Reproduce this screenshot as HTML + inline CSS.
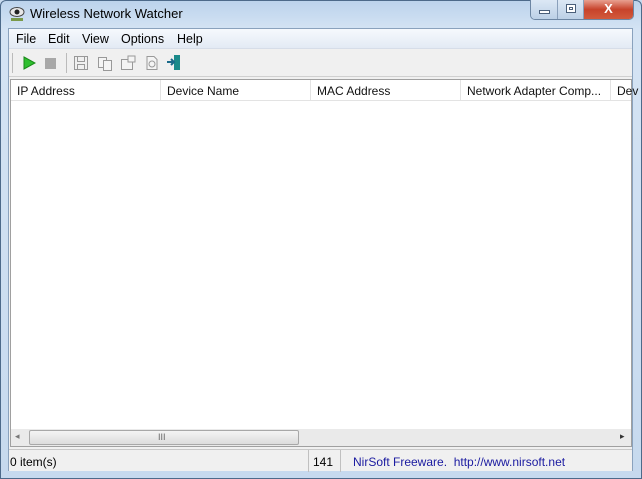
<!DOCTYPE html>
<html><head><style>
*{margin:0;padding:0;box-sizing:border-box}
body{width:642px;height:479px;overflow:hidden;background:#c9dbef;font-family:"Liberation Sans",sans-serif;font-size:12px;position:relative}
.frame{position:absolute;left:0;top:0;width:642px;height:479px;background:linear-gradient(180deg,#bcd3ec 0,#d5e4f4 30px,#c6d9ee 100%);border:1px solid #4d6a8a;border-radius:6px 6px 0 0}
.title{position:absolute;left:30px;top:6px;font-size:13px;color:#000}
.client{position:absolute;left:8px;top:28px;width:625px;height:443px;background:#f0f0f0;border:1px solid #8aa2bd}
.menu{position:absolute;left:0;top:0;width:100%;height:20px;background:linear-gradient(#f6f9fd,#e3eaf4);border-bottom:1px solid #d6dde8}
.menu span{position:absolute;top:3px;font-size:12.5px}
.tb{position:absolute;top:20px;left:0;width:100%;height:28px;background:#f0f0f0;border-bottom:1px solid #d0d0d0}
.list{position:absolute;left:1px;top:50px;width:622px;height:368px;background:#fff;border:1px solid #a0a0a0}
.hdr{position:absolute;left:0;top:0;width:100%;height:21px;background:#fff;border-bottom:1px solid #e3e3e3}
.hdr span{position:absolute;top:4px;font-size:12px;color:#111}
.hdr i{position:absolute;top:0;width:1px;height:21px;background:#e3e3e3}
.sb{position:absolute;left:0;top:349px;width:620px;height:17px;background:#eaeaea}
.thumb{position:absolute;left:18px;top:1px;width:270px;height:15px;background:linear-gradient(#f4f4f4,#dcdcdc);border:1px solid #a8a8a8;border-radius:2px}
.status{position:absolute;left:0;top:420px;width:100%;height:22px;background:#f0f0f0;border-top:1px solid #c8c8c8}
.status span{position:absolute;top:5px;font-size:12px}
.status i{position:absolute;top:0;width:1px;height:22px;background:#c0c0c0}
.btns{position:absolute;top:0;left:530px;height:20px;width:104px;border:1px solid #6d86a3;border-top:none;border-radius:0 0 5px 5px;overflow:hidden;display:flex}
.btns div{height:19px}
</style></head><body>
<div class="frame"></div>
<svg style="position:absolute;left:8px;top:5px" width="18" height="18" viewBox="0 0 18 18"><ellipse cx="9" cy="7" rx="7" ry="4.5" fill="#e8e8e8" stroke="#444"/><circle cx="9" cy="7" r="2.5" fill="#222"/><path d="M3 13h12v3H3z" fill="#7a9a4a"/></svg>
<div class="title">Wireless Network Watcher</div>
<div class="btns">
<div style="width:27px;background:linear-gradient(#dce8f5,#bcd0e6);border-right:1px solid #8aa0bb;position:relative"><b style="position:absolute;left:8px;top:10px;width:11px;height:4px;background:#fff;border:1px solid #4a5f7a"></b></div>
<div style="width:26px;background:linear-gradient(#dce8f5,#bcd0e6);border-right:1px solid #8aa0bb;position:relative"><b style="position:absolute;left:8px;top:4px;width:10px;height:9px;border:1px solid #4a5f7a;background:#fff"></b><b style="position:absolute;left:11px;top:7px;width:4px;height:3px;border:1px solid #4a5f7a"></b></div>
<div style="flex:1;background:linear-gradient(#e8a090,#c7432b 50%,#d25a3c);color:#fff;font-weight:bold;text-align:center;font-size:13px;line-height:18px">X</div>
</div>
<div class="client">
<div class="menu"><span style="left:7px">File</span><span style="left:39px">Edit</span><span style="left:73px">View</span><span style="left:112px">Options</span><span style="left:168px">Help</span></div>
<div class="tb">
<i style="position:absolute;left:3px;top:4px;width:1px;height:20px;background:#bbb"></i>
<svg style="position:absolute;left:13px;top:7px" width="14" height="14"><path d="M2 1L13 7L2 13Z" fill="#2fbf2f" stroke="#198a19"/></svg>
<div style="position:absolute;left:36px;top:9px;width:11px;height:11px;background:#a8a8a8"></div>
<i style="position:absolute;left:57px;top:4px;width:1px;height:20px;background:#bbb"></i>
<svg style="position:absolute;left:64px;top:6px" width="16" height="16" fill="none" stroke="#999"><rect x="1.5" y="1.5" width="13" height="13"/><rect x="4.5" y="1.5" width="7" height="5"/><rect x="4.5" y="9.5" width="7" height="5"/></svg>
<svg style="position:absolute;left:88px;top:7px" width="16" height="16" fill="#f4f4f4" stroke="#999"><rect x="1.5" y="1.5" width="8" height="10"/><rect x="6.5" y="4.5" width="8" height="10"/></svg>
<svg style="position:absolute;left:111px;top:5px" width="17" height="17" fill="#f4f4f4" stroke="#999"><rect x="1.5" y="5.5" width="11" height="10"/><path d="M8 2h7v6h-7z"/></svg>
<svg style="position:absolute;left:135px;top:6px" width="16" height="16" fill="#f4f4f4" stroke="#999"><path d="M3 1.5h7l3 3v10H3z"/><circle cx="8" cy="9" r="3"/></svg>
<svg style="position:absolute;left:157px;top:5px" width="17" height="17"><rect x="8" y="1" width="6" height="15" fill="#1a8a8a"/><path d="M1 8h7M5 5l3 3-3 3" stroke="#1a6a8a" stroke-width="2" fill="none"/></svg>
</div>
<div class="list">
<div class="hdr"><span style="left:6px">IP Address</span><i style="left:149px"></i><span style="left:156px">Device Name</span><i style="left:299px"></i><span style="left:306px">MAC Address</span><i style="left:449px"></i><span style="left:456px">Network Adapter Comp...</span><i style="left:599px"></i><span style="left:606px">Dev</span></div>
<div class="sb"><span style="position:absolute;left:4px;top:2px;font-size:9px;color:#777">◂</span><div class="thumb"><span style="position:absolute;left:128px;top:1px;font-size:9px;color:#666">III</span></div><span style="position:absolute;left:609px;top:2px;font-size:9px;color:#333">▸</span></div>
</div>
<div class="status"><span style="left:1px">0 item(s)</span><i style="left:299px"></i><span style="left:304px">141</span><i style="left:331px"></i><span style="left:344px;color:#1a1aa0">NirSoft Freeware.&nbsp; http://www.nirsoft.net</span></div>
</div>
</body></html>
